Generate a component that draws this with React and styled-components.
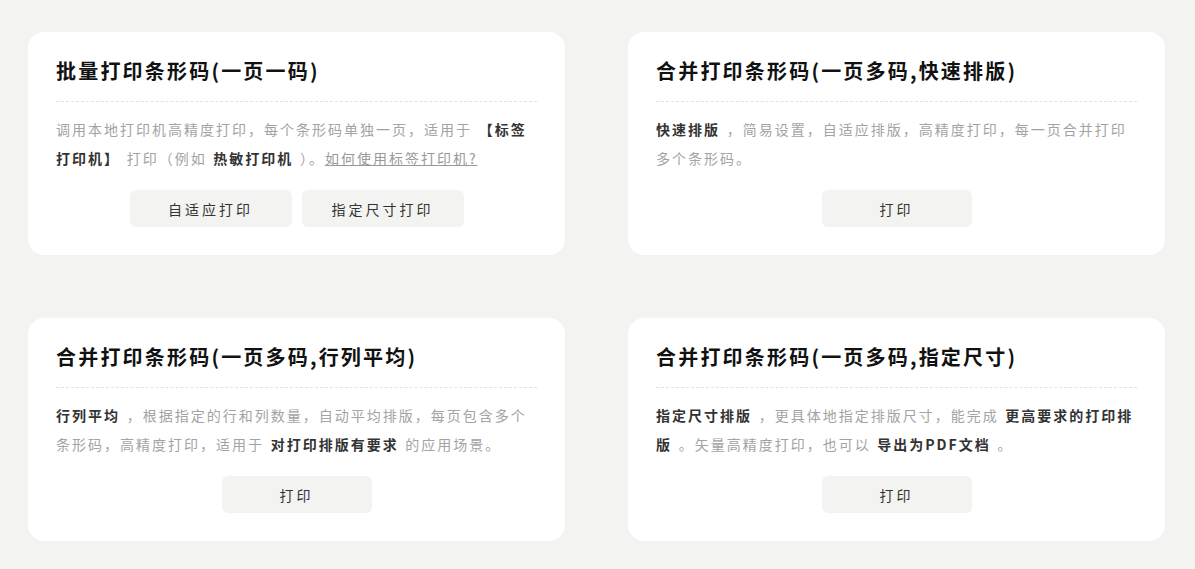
import styled, { createGlobalStyle } from "styled-components";

const GlobalStyle = createGlobalStyle`
  body {
    margin: 0;
    background: #f3f4f2;
    font-family: "Noto Sans CJK SC", "Noto Sans", sans-serif;
  }
`;

const Page = styled.main`
  display: grid;
  grid-template-columns: 537px 537px;
  column-gap: 63px;
  row-gap: 63px;
  padding: 32px 28px;
`;

const Card = styled.section`
  background: #ffffff;
  border-radius: 16px;
  padding: 25px 28px 28px;
  display: flex;
  flex-direction: column;
`;

const Title = styled.h2`
  margin: 0;
  font-size: 20px;
  line-height: 28px;
  font-weight: 700;
  letter-spacing: 2.2px;
  color: #111;
  padding-bottom: 16px;
  border-bottom: 1px dashed #e2e2e2;
`;

const Desc = styled.p`
  margin: 13px 0 0;
  font-size: 14px;
  line-height: 29px;
  letter-spacing: 2px;
  word-spacing: 1.5px;
  color: #a3a3a3;
  min-height: 58px;

  b {
    color: #333;
    font-weight: 700;
  }
`;

const Link = styled.a`
  color: #999;
  text-decoration: underline;
`;

const Actions = styled.div`
  display: flex;
  justify-content: center;
  gap: 10px;
  margin-top: 17px;
`;

const Button = styled.button`
  width: ${(p) => p.$width}px;
  height: 37px;
  border: none;
  border-radius: 6px;
  background: #f3f4f2;
  color: #333;
  font-family: inherit;
  font-size: 14px;
  letter-spacing: 3px;
  cursor: pointer;
`;

const cards = [
  {
    title: "批量打印条形码(一页一码)",
    body: (
      <>
        调用本地打印机高精度打印，每个条形码单独一页，适用于 <b>【标签打印机】</b> 打印（例如 <b>热敏打印机</b> ）。
        <Link href="#">如何使用标签打印机?</Link>
      </>
    ),
    buttons: [
      { label: "自适应打印", width: 162 },
      { label: "指定尺寸打印", width: 162 },
    ],
  },
  {
    title: "合并打印条形码(一页多码,快速排版)",
    body: (
      <>
        <b>快速排版</b> ，简易设置，自适应排版，高精度打印，每一页合并打印多个条形码。
      </>
    ),
    buttons: [{ label: "打印", width: 150 }],
  },
  {
    title: "合并打印条形码(一页多码,行列平均)",
    body: (
      <>
        <b>行列平均</b> ，根据指定的行和列数量，自动平均排版，每页包含多个条形码，高精度打印，适用于 <b>对打印排版有要求</b> 的应用场景。
      </>
    ),
    buttons: [{ label: "打印", width: 150 }],
  },
  {
    title: "合并打印条形码(一页多码,指定尺寸)",
    body: (
      <>
        <b>指定尺寸排版</b> ，更具体地指定排版尺寸，能完成 <b>更高要求的打印排版</b> 。矢量高精度打印，也可以 <b>导出为PDF文档</b> 。
      </>
    ),
    buttons: [{ label: "打印", width: 150 }],
  },
];

const App = () => {
  return (
    <>
      <GlobalStyle />
      <Page>
        {cards.map((card) => (
          <Card key={card.title}>
            <Title>{card.title}</Title>
            <Desc>{card.body}</Desc>
            <Actions>
              {card.buttons.map((btn) => (
                <Button key={btn.label} $width={btn.width}>
                  {btn.label}
                </Button>
              ))}
            </Actions>
          </Card>
        ))}
      </Page>
    </>
  );
};

export default App;
